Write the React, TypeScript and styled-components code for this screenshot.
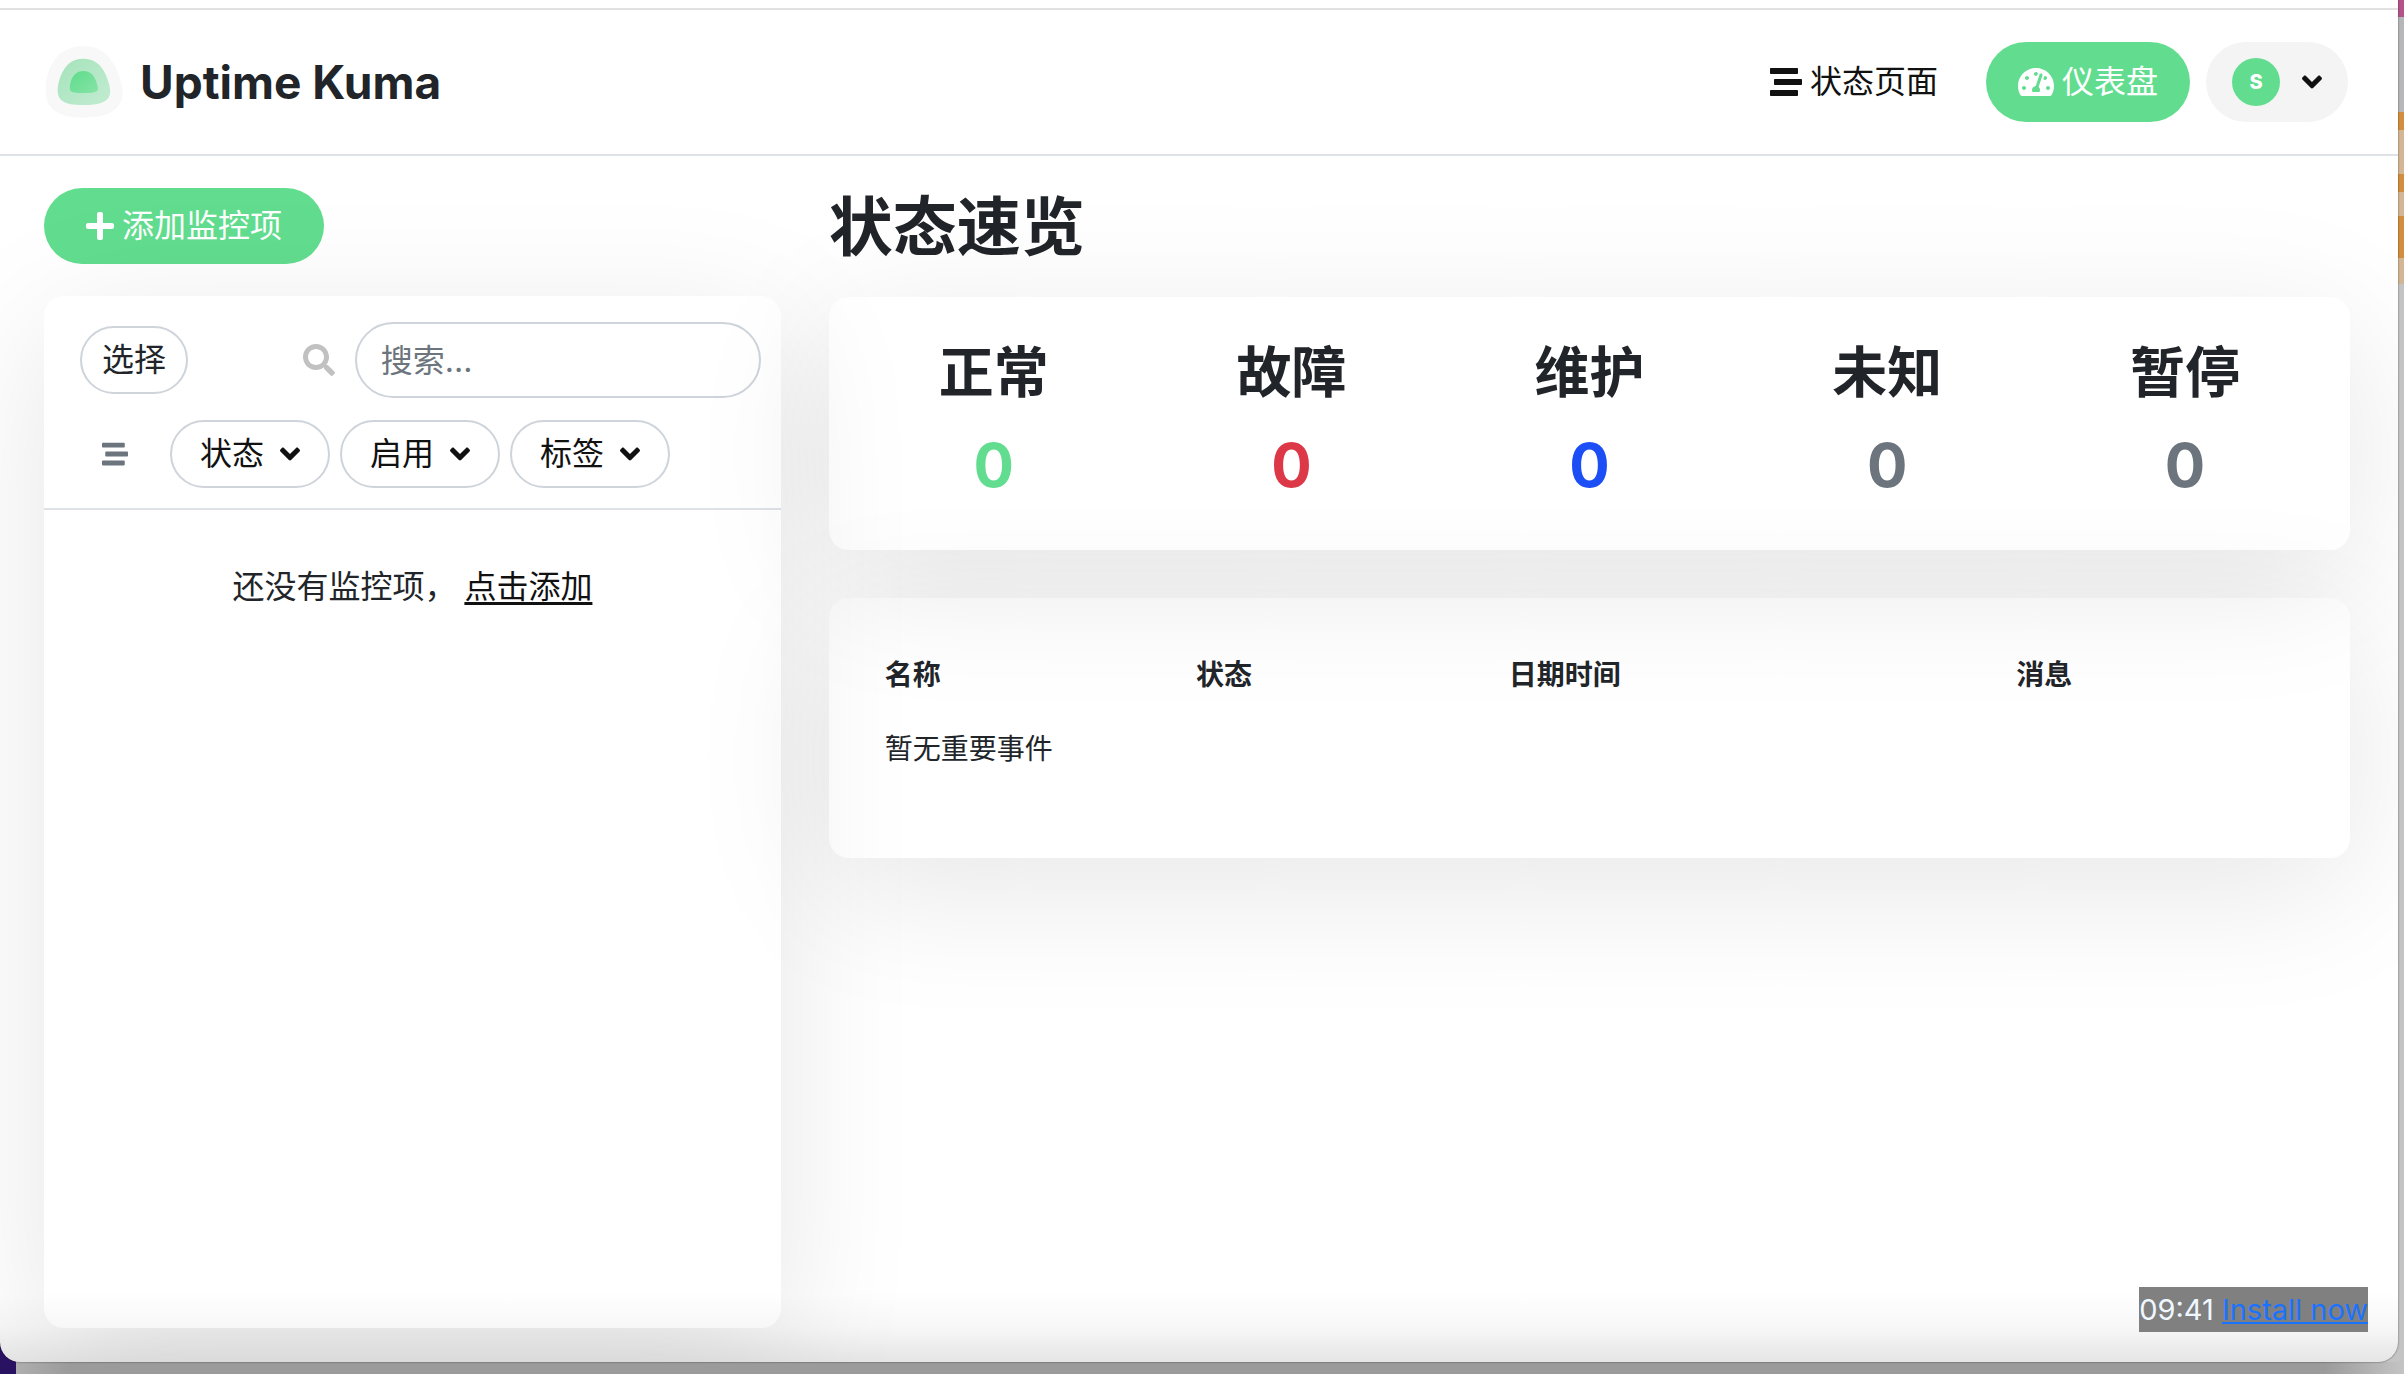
import React from "react";
import styled, { createGlobalStyle, css } from "styled-components";
import { FaAngleDown, FaPlus, FaSearch, FaStream, FaTachometerAlt } from "react-icons/fa";

const GREEN = "#62dd8f";

const GlobalStyle = createGlobalStyle`
  *, *::before, *::after { box-sizing: border-box; }
  body {
    margin: 0;
    color: #212529;
    font-family: Inter, "Noto Sans CJK SC", sans-serif;
    font-size: 32px;
    line-height: 48px;
  }
  button, input { font: inherit; color: inherit; }
  button { cursor: pointer; }
  h1, h2, h3, p { margin: 0; }
`;

const Desktop = styled.div`
  display: flex;
  min-height: 100vh;
  padding: 0 6px 12px 0;
  background:
    linear-gradient(#2a1263, #2a1263) left bottom / 16px 34px no-repeat,
    linear-gradient(90deg, #b4b4b4 0, #9b9b9b 70px, #9b9b9b calc(100% - 80px), #c4c4c4 100%) left bottom / 100% 12px no-repeat,
    linear-gradient(
      #b45389 0 17px,
      #b7b7b9 17px 112px,
      #d18f3f 112px 130px,
      #d2b696 130px 174px,
      #d18f3f 174px 192px,
      #d2b696 192px 216px,
      #d18f3f 216px 258px,
      #d2b696 258px 284px,
      #c4c4c4 284px
    );
`;

const Window = styled.div`
  position: relative;
  display: flex;
  flex: 1;
  flex-direction: column;
  min-width: 0;
  overflow: hidden;
  background: #fff;
  border-radius: 0 0 20px 20px;
  box-shadow: 0 0 2px rgba(0, 0, 0, 0.6);
`;

const WindowEdge = styled.div`
  height: 10px;
  border-bottom: 2px solid #e1e1e1;
`;

const Header = styled.header`
  display: flex;
  align-items: center;
  justify-content: space-between;
  height: 146px;
  padding: 0 50px 0 44px;
  border-bottom: 2px solid #dee2e6;
`;

const Brand = styled.a`
  display: flex;
  align-items: center;
  gap: 16px;
  color: inherit;
  text-decoration: none;
`;

const BrandName = styled.span`
  font-size: 46px;
  font-weight: 700;
  line-height: 72px;
`;

const Nav = styled.nav`
  display: flex;
  align-items: center;
  gap: 16px;
`;

const pill = css`
  display: flex;
  align-items: center;
  border-radius: 50px;
`;

const NavLink = styled.a<{ $active?: boolean }>`
  ${pill}
  gap: 8px;
  height: 80px;
  padding: 0 32px;
  color: ${(p) => (p.$active ? "#fff" : "#111")};
  background: ${(p) => (p.$active ? GREEN : "transparent")};
  text-decoration: none;
  svg { width: ${(p) => (p.$active ? 36 : 32)}px; height: 32px; }
`;

const ProfileButton = styled.button`
  ${pill}
  gap: 22px;
  height: 80px;
  padding: 0 26px;
  color: #111;
  background: #f4f4f4;
  border: 0;
`;

const Avatar = styled.span`
  display: grid;
  place-items: center;
  width: 48px;
  height: 48px;
  color: #fff;
  background: ${GREEN};
  border-radius: 50%;
  font-size: 20px;
  font-weight: 800;
  line-height: 24px;
`;

const Chevron = styled(FaAngleDown)`
  width: 20px;
  height: 32px;
`;

const Main = styled.main`
  display: grid;
  flex: 1;
  grid-template-columns: minmax(0, 31fr) minmax(0, 64fr);
  gap: 48px;
  padding: 32px 48px 34px 44px;
`;

const Column = styled.div`
  display: flex;
  flex-direction: column;
  min-width: 0;
`;

const AddButton = styled.button`
  ${pill}
  align-self: flex-start;
  gap: 8px;
  height: 76px;
  margin-bottom: 32px;
  padding: 0 42px;
  color: #fff;
  background: ${GREEN};
  border: 0;
  svg { width: 28px; height: 32px; }
`;

const panel = css`
  border-radius: 20px;
  box-shadow: 0 30px 140px rgba(0, 0, 0, 0.1);
`;

const MonitorPanel = styled.section`
  ${panel}
  flex: 1;
  min-height: 400px;
`;

const PanelHeader = styled.div`
  display: flex;
  flex-direction: column;
  gap: 22px;
  padding: 26px 20px 20px 36px;
  border-bottom: 2px solid #dee2e6;
`;

const Row = styled.div`
  display: flex;
  align-items: center;
  justify-content: space-between;
`;

const SearchBox = styled.label`
  display: flex;
  align-items: center;
  gap: 20px;
  color: #c1c1c1;
  svg { width: 32px; height: 32px; }
`;

const SearchInput = styled.input`
  width: 406px;
  height: 76px;
  padding: 0 24px;
  color: #212529;
  background: transparent;
  border: 2px solid #ced4da;
  border-radius: 38px;
  &::placeholder { color: #6c757d; opacity: 1; }
`;

const OutlineButton = styled.button<{ $wide?: boolean }>`
  ${pill}
  justify-content: center;
  gap: 16px;
  width: ${(p) => (p.$wide ? 160 : 108)}px;
  height: 68px;
  padding: 0;
  color: ${(p) => (p.$wide ? "#111" : "#212529")};
  background: transparent;
  border: 2px solid #ced4da;
`;

const Filters = styled.div`
  display: flex;
  align-items: center;
  gap: 10px;
`;

const ClearFilters = styled.button`
  display: grid;
  place-items: center;
  width: 70px;
  height: 68px;
  margin-right: 10px;
  padding: 0;
  color: #6c757d;
  background: transparent;
  border: 0;
  svg { width: 26px; height: 26px; }
`;

const EmptyList = styled.p`
  display: flex;
  justify-content: center;
  gap: 8px;
  padding-top: 53px;
`;

const AddLink = styled.a`
  color: #111;
  text-underline-offset: 4px;
`;

const PageTitle = styled.h1`
  margin-bottom: 32px;
  font-size: 64px;
  font-weight: 700;
  line-height: 77px;
`;

const Stats = styled.section`
  ${panel}
  display: grid;
  grid-template-columns: repeat(5, 1fr);
  height: 253px;
  margin-bottom: 48px;
  padding: 42px 16px 40px;
  text-align: center;
`;

const StatLabel = styled.h3`
  margin-bottom: 14px;
  font-size: 55px;
  font-weight: 700;
  line-height: 67px;
`;

const StatValue = styled.span<{ $color: string }>`
  display: block;
  color: ${(p) => p.$color};
  font-size: 60px;
  font-weight: 700;
  line-height: 90px;
`;

const Events = styled.section`
  ${panel}
  padding: 40px 40px 72px;
`;

const EventTable = styled.table`
  width: 100%;
  border-collapse: collapse;
  table-layout: fixed;
  font-size: 28px;
  line-height: 42px;
  text-align: left;
  th, td { padding: 16px; }
  th { font-weight: 700; }
`;

const Col = styled.col<{ $width: string }>`
  width: ${(p) => p.$width};
`;

const BottomShade = styled.div`
  position: absolute;
  right: 0;
  bottom: 0;
  left: 0;
  height: 70px;
  background: linear-gradient(rgba(0, 0, 0, 0), rgba(0, 0, 0, 0.03) 50%, rgba(0, 0, 0, 0.1));
  pointer-events: none;
`;

const InstallBadge = styled.div`
  position: absolute;
  right: 30px;
  bottom: 30px;
  color: #f0f8ff;
  background: #808080;
  font-size: 29px;
  line-height: 45px;
  a { color: #1a73ff; }
`;

const stats = [
  { label: "正常", value: 0, color: GREEN },
  { label: "故障", value: 0, color: "#dc3848" },
  { label: "维护", value: 0, color: "#1c4ef5" },
  { label: "未知", value: 0, color: "#6c757d" },
  { label: "暂停", value: 0, color: "#6c757d" },
];

const columns = [
  { title: "名称", width: "21.6%" },
  { title: "状态", width: "21.7%" },
  { title: "日期时间", width: "35.2%" },
  { title: "消息", width: "21.5%" },
];

const filters = ["状态", "启用", "标签"];

function Logo() {
  return (
    <svg width="80" height="80" viewBox="30 18 240 240" aria-hidden="true">
      <defs>
        <linearGradient id="core" x1="0" y1="0" x2="1" y2="1">
          <stop offset="0" stopColor="#5edc8b" />
          <stop offset="1" stopColor="#86e3a7" />
        </linearGradient>
        <linearGradient id="ring" x1="0" y1="0" x2="1" y2="1">
          <stop offset="0" stopColor="#a5e3bb" />
          <stop offset="1" stopColor="#c2ecd1" />
        </linearGradient>
      </defs>
      <path fill="#f8f8f8" d="M150 30C195 30 225 55 245 95C262 132 270 165 264 190C250 232 205 245 150 245C100 245 55 235 40 195C30 165 35 130 48 95C68 50 105 30 150 30Z" />
      <path fill="url(#ring)" d="M147 68C180 68 202 85 216 118C228 148 232 168 225 183C214 203 182 207 150 207C118 207 90 204 78 188C67 172 70 148 80 120C94 85 115 68 147 68Z" />
      <path fill="url(#core)" d="M148 105C168 105 181 118 187 138C192 153 193 160 190 164C180 171 165 171 150 171C135 171 118 171 110 165C106 159 107 150 110 138C116 118 128 105 148 105Z" />
    </svg>
  );
}

export default function App() {
  return (
    <>
      <GlobalStyle />
      <Desktop>
        <Window>
          <WindowEdge />
          <Header>
            <Brand href="#">
              <Logo />
              <BrandName>Uptime Kuma</BrandName>
            </Brand>
            <Nav>
              <NavLink href="#status">
                <FaStream />
                状态页面
              </NavLink>
              <NavLink href="#dashboard" $active>
                <FaTachometerAlt />
                仪表盘
              </NavLink>
              <ProfileButton type="button">
                <Avatar>S</Avatar>
                <Chevron />
              </ProfileButton>
            </Nav>
          </Header>
          <Main>
            <Column>
              <AddButton type="button">
                <FaPlus />
                添加监控项
              </AddButton>
              <MonitorPanel>
                <PanelHeader>
                  <Row>
                    <OutlineButton type="button">选择</OutlineButton>
                    <SearchBox>
                      <FaSearch />
                      <SearchInput type="text" placeholder="搜索..." />
                    </SearchBox>
                  </Row>
                  <Filters>
                    <ClearFilters type="button">
                      <FaStream />
                    </ClearFilters>
                    {filters.map((name) => (
                      <OutlineButton key={name} type="button" $wide>
                        {name}
                        <Chevron />
                      </OutlineButton>
                    ))}
                  </Filters>
                </PanelHeader>
                <EmptyList>
                  <span>还没有监控项，</span>
                  <AddLink href="#add">点击添加</AddLink>
                </EmptyList>
              </MonitorPanel>
            </Column>
            <Column>
              <PageTitle>状态速览</PageTitle>
              <Stats>
                {stats.map((s) => (
                  <div key={s.label}>
                    <StatLabel>{s.label}</StatLabel>
                    <StatValue $color={s.color}>{s.value}</StatValue>
                  </div>
                ))}
              </Stats>
              <Events>
                <EventTable>
                  <colgroup>
                    {columns.map((c) => (
                      <Col key={c.title} $width={c.width} />
                    ))}
                  </colgroup>
                  <thead>
                    <tr>
                      {columns.map((c) => (
                        <th key={c.title} scope="col">{c.title}</th>
                      ))}
                    </tr>
                  </thead>
                  <tbody>
                    <tr>
                      <td colSpan={4}>暂无重要事件</td>
                    </tr>
                  </tbody>
                </EventTable>
              </Events>
            </Column>
          </Main>
          <BottomShade />
          <InstallBadge>
            09:41 <a href="#install">Install now</a>
          </InstallBadge>
        </Window>
      </Desktop>
    </>
  );
}
